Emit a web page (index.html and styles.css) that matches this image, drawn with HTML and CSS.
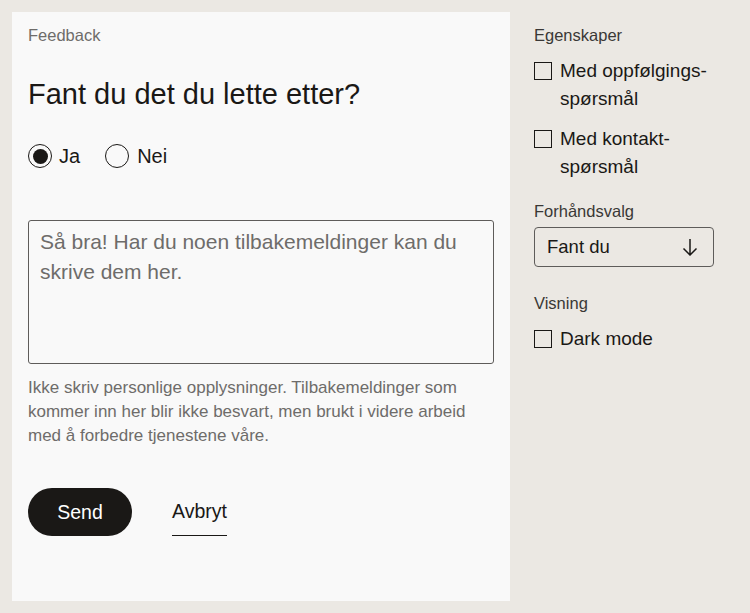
FILE: index.html
```html
<!DOCTYPE html>
<html lang="no">
<head>
<meta charset="utf-8">
<link rel="stylesheet" href="styles.css">
</head>
<body>
<div class="page">
  <main class="panel">
    <div class="eyebrow">Feedback</div>
    <h1 class="title">Fant du det du lette etter?</h1>
    <div class="radios">
      <label class="radio"><span class="dot checked"></span>Ja</label>
      <label class="radio"><span class="dot"></span>Nei</label>
    </div>
    <div class="textarea">Så bra! Har du noen tilbakemeldinger kan du skrive dem her.</div>
    <p class="help">Ikke skriv personlige opplysninger. Tilbakemeldinger som kommer inn her blir ikke besvart, men brukt i videre arbeid med å forbedre tjenestene våre.</p>
    <div class="actions">
      <button class="send">Send</button>
      <button class="cancel">Avbryt</button>
    </div>
  </main>
  <aside class="side">
    <div class="group">
      <div class="label">Egenskaper</div>
      <label class="check"><span class="box"></span><span>Med oppfølgings-<br>spørsmål</span></label>
      <label class="check"><span class="box"></span><span>Med kontakt-<br>spørsmål</span></label>
    </div>
    <div class="group group-select">
      <div class="label">Forhåndsvalg</div>
      <div class="select"><span>Fant du</span>
        <svg width="16" height="18" viewBox="0 0 16 18" fill="none" stroke="#1a1816" stroke-width="1.5"><path d="M8 1v16M1.5 10.5L8 17l6.5-6.5"/></svg>
      </div>
    </div>
    <div class="group group-view">
      <div class="label">Visning</div>
      <label class="check"><span class="box"></span><span>Dark mode</span></label>
    </div>
  </aside>
</div>
</body>
</html>
```
FILE: styles.css
```css
* { box-sizing: border-box; }
html, body { margin: 0; padding: 0; }
body {
  background: #ebe8e3;
  font-family: "Liberation Sans", Arial, sans-serif;
  color: #1a1816;
  width: 750px;
  height: 613px;
  overflow: hidden;
}
.page {
  display: flex;
  padding: 12px;
  gap: 24px;
  align-items: flex-start;
}
.panel {
  width: 498px;
  height: 589px;
  background: #f9f9f9;
  padding: 11px 16px 0;
}
.eyebrow {
  font-size: 16.5px;
  line-height: 24px;
  color: #6e6c6a;
}
.title {
  margin: 29px 0 0;
  font-size: 29px;
  line-height: 36px;
  font-weight: 400;
}
.radios {
  display: flex;
  gap: 24px;
  margin-top: 24px;
  height: 40px;
  align-items: center;
}
.radio {
  display: flex;
  align-items: center;
  gap: 7px;
  font-size: 20px;
}
.radio + .radio { gap: 8px; margin-left: 1px; }
.dot {
  width: 24px;
  height: 24px;
  border: 1.5px solid #1a1816;
  border-radius: 50%;
  display: flex;
  align-items: center;
  justify-content: center;
}
.dot.checked::after {
  content: "";
  width: 15px;
  height: 15px;
  border-radius: 50%;
  background: #1a1816;
}
.textarea {
  margin-top: 44px;
  height: 144px;
  border: 1px solid #5e5c5a;
  border-radius: 3px;
  padding: 6px 11px;
  font-size: 21px;
  line-height: 30px;
  color: #6e6c6a;
}
.help {
  margin: 12px 0 0;
  font-size: 17px;
  line-height: 24px;
  color: #6e6c6a;
}
.actions {
  display: flex;
  align-items: center;
  gap: 40px;
  margin-top: 40px;
}
.send {
  width: 104px;
  height: 48px;
  border: 0;
  border-radius: 24px;
  background: #1a1816;
  color: #fff;
  font: 400 19.5px "Liberation Sans", Arial, sans-serif;
}
.cancel {
  height: 48px;
  border: 0;
  border-bottom: 1.5px solid #1a1816;
  padding: 0;
  background: none;
  color: #1a1816;
  font: 400 19.5px "Liberation Sans", Arial, sans-serif;
}
.side {
  width: 180px;
  padding-top: 11px;
}
.label {
  font-size: 16.5px;
  line-height: 24px;
  color: #3a3836;
}
.check {
  display: flex;
  align-items: flex-start;
  gap: 8px;
  margin-top: 10px;
  font-size: 19px;
  line-height: 28px;
  white-space: nowrap;
}
.check + .check { margin-top: 12px; }
.box {
  flex: none;
  width: 18px;
  height: 18px;
  border: 1.5px solid #1a1816;
  margin-top: 5px;
}
.group-select { margin-top: 18px; }
.group-view { margin-top: 24px; }
.select {
  margin-top: 4px;
  height: 40px;
  border: 1px solid #5e5c5a;
  border-radius: 4px;
  display: flex;
  align-items: center;
  justify-content: space-between;
  padding: 0 15px 0 12px;
  font-size: 18.5px;
}
```
